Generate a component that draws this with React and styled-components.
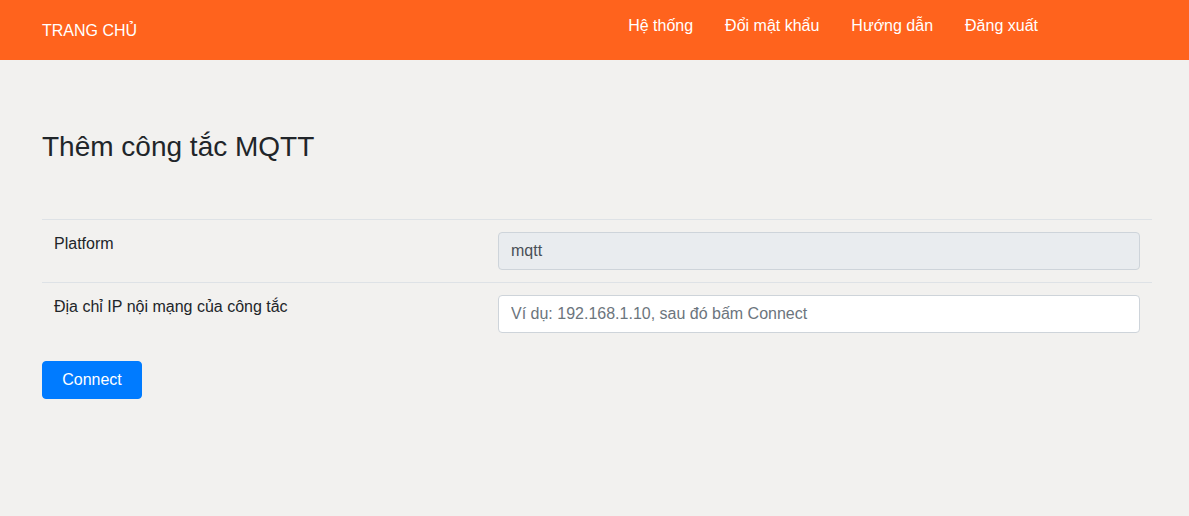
import React from 'react';
import styled, { createGlobalStyle } from 'styled-components';

const GlobalStyle = createGlobalStyle`
	* { box-sizing: border-box; }
	body {
		margin: 0;
		background: #f2f1ef;
		font-family: "Liberation Sans", Arial, sans-serif;
		font-size: 16px;
		line-height: 1.5;
		color: #212529;
	}
`;

const Header = styled.header`
	height: 60px;
	background: #ff631d;
	display: flex;
	align-items: center;
	padding: 0 135px 0 42px;
`;

const Brand = styled.a`
	color: #fff;
	font-size: 16px;
	text-decoration: none;
	margin-top: 2px;
`;

const Nav = styled.nav`
	margin-left: auto;
	display: flex;
	margin-top: -8px;
`;

const NavLink = styled.a`
	color: #fff;
	text-decoration: none;
	padding: 8px 16px;
	font-size: 16px;
`;

const Main = styled.main`
	padding: 70px 37px 0 42px;
`;

const Title = styled.h3`
	margin: 0 0 55px;
	font-size: 28px;
	font-weight: 400;
	line-height: 1.2;
`;

const Table = styled.table`
	width: 100%;
	border-collapse: collapse;
	margin-bottom: 16px;
`;

const Row = styled.tr`
	border-top: 1px solid #dee2e6;
`;

const Cell = styled.td`
	padding: 12px;
	vertical-align: top;
	width: ${p => p.$w || 'auto'};
`;

const Input = styled.input`
	display: block;
	width: 100%;
	height: 38px;
	padding: 6px 12px;
	font-family: inherit;
	font-size: 16px;
	color: #495057;
	background: ${p => (p.disabled ? '#e9ecef' : '#fff')};
	border: 1px solid #ced4da;
	border-radius: 4px;
	outline: none;
	&::placeholder { color: #6c757d; }
`;

const Button = styled.button`
	height: 38px;
	width: 100px;
	background: #007bff;
	color: #fff;
	border: 1px solid #007bff;
	border-radius: 4px;
	font-family: inherit;
	font-size: 16px;
	cursor: pointer;
`;

export default function App() {
	return (
		<>
			<GlobalStyle />
			<Header>
				<Brand href="#">TRANG CHỦ</Brand>
				<Nav>
					<NavLink href="#">Hệ thống</NavLink>
					<NavLink href="#">Đổi mật khẩu</NavLink>
					<NavLink href="#">Hướng dẫn</NavLink>
					<NavLink href="#">Đăng xuất</NavLink>
				</Nav>
			</Header>
			<Main>
				<Title>Thêm công tắc MQTT</Title>
				<Table>
					<tbody>
						<Row>
							<Cell $w="40%">Platform</Cell>
							<Cell><Input value="mqtt" disabled readOnly /></Cell>
						</Row>
						<Row>
							<Cell $w="40%">Địa chỉ IP nội mạng của công tắc</Cell>
							<Cell><Input placeholder="Ví dụ: 192.168.1.10, sau đó bấm Connect" /></Cell>
						</Row>
					</tbody>
				</Table>
				<Button>Connect</Button>
			</Main>
		</>
	);
}
